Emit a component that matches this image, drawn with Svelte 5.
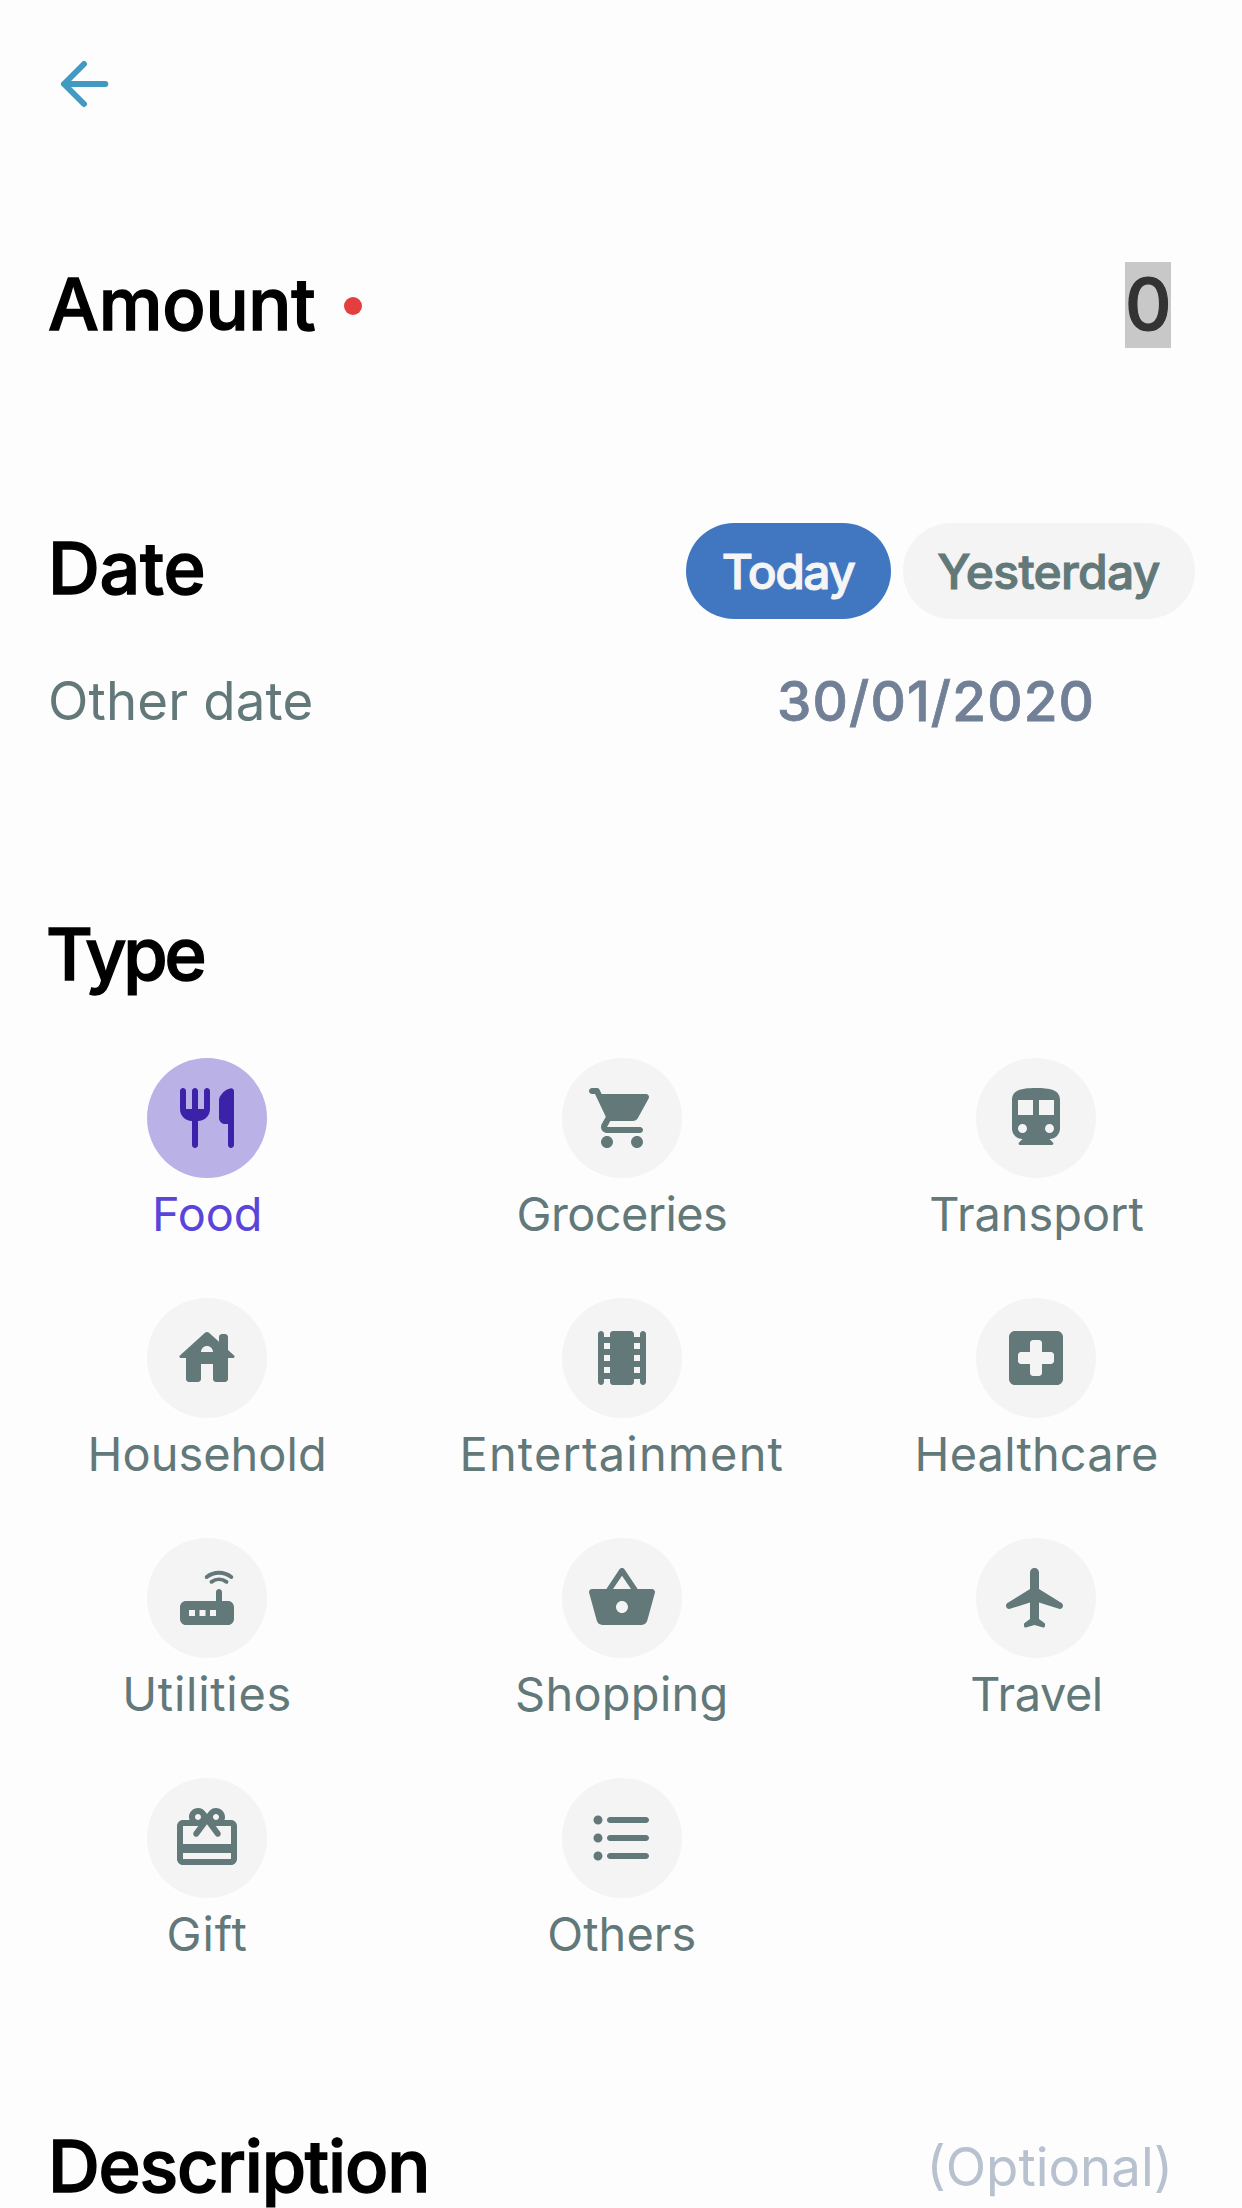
<script>
  const types = [
    { name: 'Food', ls: -0.14, active: true, d: 'M16 6v6c0 1.1.9 2 2 2h1v7c0 .55.45 1 1 1s1-.45 1-1V3.13c0-.65-.61-1.13-1.24-.98C17.36 2.74 16 4.9 16 6zm-5 3H9V3c0-.55-.45-1-1-1s-1 .45-1 1v6H5V3c0-.55-.45-1-1-1s-1 .45-1 1v6c0 2.21 1.79 4 4 4v8c0 .55.45 1 1 1s1-.45 1-1v-8c2.21 0 4-1.79 4-4V3c0-.55-.45-1-1-1s-1 .45-1 1v6z' },
    { name: 'Groceries', ls: -0.59, d: 'M7 18c-1.1 0-1.99.9-1.99 2S5.9 22 7 22s2-.9 2-2-.9-2-2-2zM1 3c0 .55.45 1 1 1h1l3.6 7.59-1.35 2.44C4.52 15.37 5.48 17 7 17h11c.55 0 1-.45 1-1s-.45-1-1-1H7l1.1-2h7.45c.75 0 1.41-.41 1.75-1.03l3.58-6.49c.37-.66-.11-1.48-.87-1.48H5.21l-.67-1.43c-.16-.35-.52-.57-.9-.57H2c-.55 0-1 .45-1 1zm16 15c-1.1 0-1.99.9-1.99 2s.89 2 1.99 2 2-.9 2-2-.9-2-2-2z' },
    { name: 'Transport', ls: -0.02, d: 'M12 2c-4.42 0-8 .5-8 4v9.5C4 17.43 5.57 19 7.5 19l-1.15 1.15c-.31.31-.09.85.35.85h10.59c.45 0 .67-.54.35-.85L16.5 19c1.93 0 3.5-1.57 3.5-3.5V6c0-3.5-3.58-4-8-4zM6 6h5v5H6zM13 6h5v5h-5zM7.5 14a1.5 1.5 0 1 1 0 3 1.5 1.5 0 0 1 0-3zM16.5 14a1.5 1.5 0 1 1 0 3 1.5 1.5 0 0 1 0-3z' },
    { name: 'Household', ls: 0.05, d: 'M19 9.3V5c0-.55-.45-1-1-1h-1c-.55 0-1 .45-1 1v1.6l-3.33-3c-.38-.34-.96-.34-1.34 0l-8.36 7.53c-.34.3-.13.87.33.87H5v7c0 .55.45 1 1 1h3c.55 0 1-.45 1-1v-5h4v5c0 .55.45 1 1 1h3c.55 0 1-.45 1-1v-7h1.7c.46 0 .68-.57.33-.87L19 9.3zM10 10c0-1.1.9-2 2-2s2 .9 2 2h-4z' },
    { name: 'Entertainment', ls: 1.2, d: 'M18 4v1h-2V4c0-.55-.45-1-1-1H9c-.55 0-1 .45-1 1v1H6V4c0-.55-.45-1-1-1s-1 .45-1 1v16c0 .55.45 1 1 1s1-.45 1-1v-1h2v1c0 .55.45 1 1 1h6c.55 0 1-.45 1-1v-1h2v1c0 .55.45 1 1 1s1-.45 1-1V4c0-.55-.45-1-1-1s-1 .45-1 1zM8 17H6v-2h2v2zm0-4H6v-2h2v2zm0-4H6V7h2v2zm10 8h-2v-2h2v2zm0-4h-2v-2h2v2zm0-4h-2V7h2v2z' },
    { name: 'Healthcare', ls: 0.2, d: 'M19 3H5c-1.1 0-2 .9-2 2v14c0 1.1.9 2 2 2h14c1.1 0 2-.9 2-2V5c0-1.1-.9-2-2-2zm-2 11h-3v3c0 .55-.45 1-1 1h-2c-.55 0-1-.45-1-1v-3H7c-.55 0-1-.45-1-1v-2c0-.55.45-1 1-1h3V7c0-.55.45-1 1-1h2c.55 0 1 .45 1 1v3h3c.55 0 1 .45 1 1v2c0 .55-.45 1-1 1z' },
    { name: 'Utilities', ls: 0.75, d: 'M19 13h-2v-3c0-.55-.45-1-1-1s-1 .45-1 1v3H5c-1.1 0-2 .9-2 2v4c0 1.1.9 2 2 2h14c1.1 0 2-.9 2-2v-4c0-1.1-.9-2-2-2zM8 18H6v-2h2v2zm3.5 0h-2v-2h2v2zm3.5 0h-2v-2h2v2z', waves: 'M13.5 6.6a4.3 4.3 0 0 1 5 0M11.9 5a6.7 6.7 0 0 1 8.2 0' },
    { name: 'Shopping', ls: 0.3, d: 'M17.21 9l-4.38-6.56c-.19-.28-.51-.42-.83-.42s-.64.14-.83.43L6.79 9H2c-.55 0-1 .45-1 1 0 .09.01.18.04.27l2.54 9.27c.23.84 1 1.46 1.92 1.46h13c.92 0 1.69-.62 1.93-1.46l2.54-9.27L23 10c0-.55-.45-1-1-1h-4.79zM9 9l3-4.4L15 9H9zm3 8c-1.1 0-2-.9-2-2s.9-2 2-2 2 .9 2 2-.9 2-2 2z' },
    { name: 'Travel', ls: -0.45, d: 'M21 14.58c0-.36-.19-.69-.49-.89L13 9V3.5c0-.83-.67-1.5-1.5-1.5S10 2.67 10 3.5V9l-7.51 4.69c-.3.19-.49.53-.49.89 0 .7.68 1.21 1.36 1L10 13.5V19l-1.8 1.35c-.13.09-.2.24-.2.4v.59c0 .33.32.57.64.48L11.5 21l2.86.82c.32.09.64-.15.64-.48v-.59c0-.16-.07-.31-.2-.4L13 19v-5.5l6.64 2.08c.68.21 1.36-.3 1.36-1z' },
    { name: 'Gift', ls: 0.91, d: 'M20 6h-2.18c.11-.31.18-.65.18-1 0-1.66-1.34-3-3-3-1.05 0-1.96.54-2.5 1.35l-.5.67-.5-.68C10.96 2.54 10.05 2 9 2 7.34 2 6 3.34 6 5c0 .35.07.69.18 1H4c-1.11 0-2 .89-2 2v11c0 1.11.89 2 2 2h16c1.11 0 2-.89 2-2V8c0-1.11-.89-2-2-2zm-5-2c.55 0 1 .45 1 1s-.45 1-1 1-1-.45-1-1 .45-1 1-1zM9 4c.55 0 1 .45 1 1s-.45 1-1 1-1-.45-1-1 .45-1 1-1zm11 15H4v-2h16v2zm0-5H4V8h5.08L7.6 10.02c-.33.45-.23 1.08.22 1.4.44.32 1.07.22 1.39-.22L12 7.4l2.79 3.8c.32.44.95.54 1.39.22.45-.32.55-.95.22-1.4L14.92 8H20v6z' },
    { name: 'Others', ls: 0.09, d: 'M4 10.5a1.5 1.5 0 1 0 0 3 1.5 1.5 0 0 0 0-3zM4 4.5a1.5 1.5 0 1 0 0 3 1.5 1.5 0 0 0 0-3zM4 16.5a1.5 1.5 0 1 0 0 3 1.5 1.5 0 0 0 0-3zM8 19h12c.55 0 1-.45 1-1s-.45-1-1-1H8c-.55 0-1 .45-1 1s.45 1 1 1zM8 13h12c.55 0 1-.45 1-1s-.45-1-1-1H8c-.55 0-1 .45-1 1s.45 1 1 1zM7 6c0 .55.45 1 1 1h12c.55 0 1-.45 1-1s-.45-1-1-1H8c-.55 0-1 .45-1 1z' }
  ];
</script>

<main class="screen">
  <header class="topbar">
    <button class="back" aria-label="Back">
      <svg width="50" height="50" viewBox="0 0 50 50"><path d="M45.3 25H4M24 5 4 25l20 20" /></svg>
    </button>
  </header>

  <section class="amount">
    <h2 class="amount-title">Amount</h2>
    <span class="required"></span>
    <span class="value">0</span>
  </section>

  <section class="date">
    <div class="date-head">
      <h2 class="date-title">Date</h2>
      <div class="pills">
        <button class="pill today">Today</button>
        <button class="pill yesterday">Yesterday</button>
      </div>
    </div>
    <div class="date-other">
      <span class="other-label">Other date</span>
      <span class="other-value">30/01/2020</span>
    </div>
  </section>

  <section class="types">
    <h2 class="type-title">Type</h2>
    <div class="grid">
      {#each types as t}
        <div class="type" class:active={t.active}>
          <div class="disc">
            <svg width="72" height="72" viewBox="0 0 24 24">
              <path d={t.d} fill="currentColor" fill-rule="evenodd" />
              {#if t.waves}
                <path d={t.waves} fill="none" stroke="currentColor" stroke-width="1.3" stroke-linecap="round" />
              {/if}
            </svg>
          </div>
          <span class="name" style="letter-spacing: {t.ls}px">{t.name}</span>
        </div>
      {/each}
    </div>
  </section>

  <section class="description">
    <h2 class="desc-title">Description</h2>
    <span class="optional">(Optional)</span>
  </section>
</main>

<style>
  :global(body) { background: #fdfdfd; }
  .screen {
    box-sizing: border-box;
    width: 1242px;
    height: 2208px;
    overflow: hidden;
    background: #fdfdfd;
    font-family: Inter, Roboto, "Liberation Sans", sans-serif;
    color: #627879;
  }
  h2 {
    margin: 0;
    font-size: 71.8px;
    font-weight: 500;
    line-height: 88px;
    color: #000;
    -webkit-text-stroke: 1.4px #000;
  }
  button {
    border: 0;
    margin: 0;
    padding: 0;
    background: none;
    font: inherit;
  }
  .topbar { height: 202px; padding: 59px 0 0 60px; }
  .back { display: block; width: 50px; height: 50px; }
  .back svg {
    display: block;
    fill: none;
    stroke: #4299c2;
    stroke-width: 6;
    stroke-linecap: round;
    stroke-linejoin: round;
  }

  .amount { display: flex; align-items: center; height: 88px; padding: 0 71px 0 48px; }
  .amount-title { width: 270px; line-height: 86px; padding-bottom: 2px; letter-spacing: -0.22px; }
  .required {
    width: 18px;
    height: 18px;
    margin-left: 26px;
    margin-top: 2px;
    border-radius: 50%;
    background: #e53e3e;
  }
  .value {
    width: 46px;
    height: 86px;
    margin-left: auto;
    margin-bottom: 1px;
    background: #c8c8c8;
    color: #333;
    font-size: 72px;
    font-weight: 500;
    line-height: 84px;
    text-align: center;
    -webkit-text-stroke: 1.2px #333;
  }

  .date { padding: 174px 47px 0 48px; }
  .date-head { display: flex; justify-content: space-between; height: 96px; }
  .date-title { line-height: 90px; letter-spacing: -0.31px; }
  .pills { display: flex; gap: 12px; }
  .pill {
    height: 96px;
    border-radius: 48px;
    font-size: 48px;
    font-weight: 500;
    text-align: center;
    -webkit-text-stroke: 1px currentColor;
  }
  .today { width: 205px; padding-right: 1px; background: #4177c0; color: #f5f5f5; letter-spacing: -1.6px; }
  .yesterday { width: 292px; padding-right: 1px; background: #f4f4f4; color: #627879; letter-spacing: -0.7px; }
  .date-other { display: flex; align-items: center; height: 70px; margin-top: 47px; }
  .other-label { font-size: 52.8px; line-height: 70px; letter-spacing: 0.16px; }
  .other-value {
    width: 418px;
    margin-left: auto;
    font-size: 54.8px;
    font-weight: 500;
    line-height: 70px;
    letter-spacing: 1.15px;
    color: #718096;
    -webkit-text-stroke: 0.8px currentColor;
  }

  .types { padding-top: 174px; }
  .type-title { padding-left: 46px; letter-spacing: -3.2px; }
  .grid {
    display: grid;
    grid-template-columns: repeat(3, 414.7px);
    grid-auto-rows: 240px;
    margin: 60px 0 0 -0.5px;
  }
  .type { display: flex; flex-direction: column; align-items: center; }
  .disc {
    display: grid;
    place-items: center;
    width: 120px;
    height: 120px;
    border-radius: 50%;
    background: #f4f4f4;
  }
  .disc svg { display: block; }
  .name { margin-top: 6px; padding-left: 0.6px; font-size: 46.9px; line-height: 60px; white-space: nowrap; }
  .active .disc { background: #bab2e6; color: #3b22a8; }
  .active .name { color: #5a45da; }

  .description {
    display: flex;
    align-items: center;
    justify-content: space-between;
    height: 88px;
    margin-top: 104px;
    padding: 0 69px 0 48px;
  }
  .desc-title { letter-spacing: -1.2px; }
  .optional { padding-top: 2px; font-size: 52.8px; line-height: 70px; letter-spacing: 0; color: #b7c1cf; }
</style>
